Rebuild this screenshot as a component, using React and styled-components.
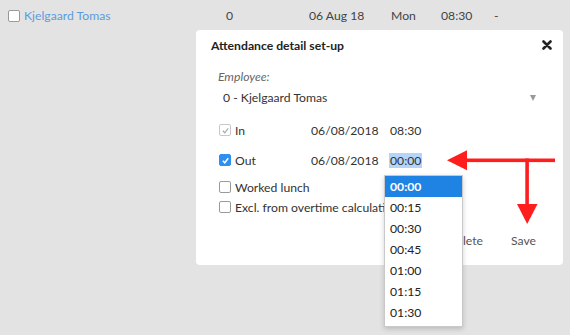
import React from "react";
import styled, { createGlobalStyle } from "styled-components";

const GlobalStyle = createGlobalStyle`
  html, body {
    margin: 0;
    padding: 0;
    background: #e3e3e3;
    font-family: Lato, "Open Sans", sans-serif;
    font-size: 12.2px;
    color: #333;
  }
`;

const times = ["00:00", "00:15", "00:30", "00:45", "01:00", "01:15", "01:30"];

const App = () => {
  return (
    <Page>
      <GlobalStyle />

      {/* list row behind the dialog */}
      <TopRow>
        <NameCell>
          <Check />
          <Link>Kjelgaard Tomas</Link>
        </NameCell>
        <Cell>0</Cell>
        <Cell>06 Aug 18</Cell>
        <Cell>Mon</Cell>
        <Cell>08:30</Cell>
        <Cell>-</Cell>
      </TopRow>

      <Dialog>
        <Title>
          <span>Attendance detail set-up</span>
          <CloseIcon width="10" height="10" viewBox="0 0 10 10">
            <path d="M1.5 1.5 L8.5 8.5 M8.5 1.5 L1.5 8.5" stroke="#222" strokeWidth="2.6" strokeLinecap="round" />
          </CloseIcon>
        </Title>

        <Body>
          <FieldLabel>Employee:</FieldLabel>
          <SelectRow>
            <span>0 - Kjelgaard Tomas</span>
            <Caret />
          </SelectRow>

          <TimeRow $top={14}>
            <CheckLabel>
              <Check $state="disabled">
                <Tick width="9" height="9" viewBox="0 0 10 10">
                  <path d="M2 5.3 L4.2 7.5 L8 2.6" stroke="#aaa" strokeWidth="1.3" fill="none" />
                </Tick>
              </Check>
              In
            </CheckLabel>
            <span>06/08/2018</span>
            <span>08:30</span>
          </TimeRow>

          <TimeRow $top={10}>
            <CheckLabel>
              <Check $state="on">
                <Tick width="9" height="9" viewBox="0 0 10 10">
                  <path d="M2 5.3 L4.2 7.5 L8 2.6" stroke="#fff" strokeWidth="1.7" fill="none" />
                </Tick>
              </Check>
              Out
            </CheckLabel>
            <span>06/08/2018</span>
            <Selected>00:00</Selected>
          </TimeRow>

          <OptionRow $top={7}>
            <Check />
            Worked lunch
          </OptionRow>
          <OptionRow>
            <Check />
            Excl. from overtime calculation
          </OptionRow>

          <Actions>
            <ActionButton>Delete</ActionButton>
            <ActionButton>Save</ActionButton>
          </Actions>
        </Body>
      </Dialog>

      <TimeList>
        {times.map((t, i) => (
          <TimeItem key={t} $active={i === 0}>{t}</TimeItem>
        ))}
      </TimeList>

      <Arrows width="130" height="90" viewBox="440 145 130 90">
        <g fill="#ff1e1e">
          <rect x="464" y="158.5" width="91" height="3.6" />
          <polygon points="447,160.3 467,150.3 467,170.3" />
          <rect x="525.3" y="158.5" width="3.6" height="48" />
          <polygon points="517,204 537.5,204 527.2,224" />
        </g>
      </Arrows>
    </Page>
  );
};

const Page = styled.div`
  position: relative;
  width: 570px;
  height: 335px;
  overflow: hidden;
`;

const TopRow = styled.div`
  display: grid;
  grid-template-columns: 218px 83px 82px 50px 53px auto;
  align-items: center;
  height: 31px;
  padding-left: 8px;
  color: #444;
`;

const NameCell = styled.div`
  display: flex;
  align-items: center;
  gap: 4px;
`;

const Cell = styled.div`
  white-space: nowrap;
`;

const Link = styled.span`
  color: #5b9be0;
`;

const Check = styled.span`
  display: inline-flex;
  align-items: center;
  justify-content: center;
  box-sizing: border-box;
  width: 12px;
  height: 12px;
  border-radius: 2px;
  border: 1px solid ${(p) => (p.$state === "on" ? "#2f8ff0" : p.$state === "disabled" ? "#c8c8c8" : "#9a9a9a")};
  background: ${(p) => (p.$state === "on" ? "#2f8ff0" : "#fff")};
  flex-shrink: 0;
`;

const Tick = styled.svg`
  display: block;
`;

const Dialog = styled.div`
  position: absolute;
  left: 196px;
  top: 30px;
  width: 367px;
  height: 235px;
  background: #fff;
  border-radius: 4px;
`;

const Title = styled.div`
  display: flex;
  align-items: center;
  justify-content: space-between;
  height: 30px;
  padding: 0 11px 0 15px;
  font-weight: 700;
  color: #222;
`;

const CloseIcon = styled.svg`
  display: block;
`;

const Body = styled.div`
  padding: 9px 0 0 22px;
`;

const FieldLabel = styled.div`
  font-style: italic;
  color: #666;
  line-height: 16px;
`;

const SelectRow = styled.div`
  display: flex;
  align-items: center;
  justify-content: space-between;
  margin-top: 5px;
  padding: 0 27px 0 5px;
  line-height: 16px;
`;

const Caret = styled.span`
  width: 0;
  height: 0;
  border-left: 3.5px solid transparent;
  border-right: 3.5px solid transparent;
  border-top: 6px solid #999;
`;

const TimeRow = styled.div`
  display: grid;
  grid-template-columns: 92px 79px auto;
  align-items: center;
  height: 20px;
  margin-top: ${(p) => p.$top || 0}px;
  padding-left: 1px;
`;

const CheckLabel = styled.div`
  display: flex;
  align-items: center;
  gap: 4px;
`;

const Selected = styled.span`
  justify-self: start;
  background: #b4d5fb;
  padding: 0 1px;
  margin-left: -1px;
`;

const OptionRow = styled.div`
  display: flex;
  align-items: center;
  gap: 4px;
  height: 20px;
  margin-top: ${(p) => p.$top || 0}px;
  padding-left: 1px;
  white-space: nowrap;
`;

const Actions = styled.div`
  display: flex;
  justify-content: flex-end;
  gap: 4px;
  margin-top: 8px;
  padding-right: 15px;
`;

const ActionButton = styled.button`
  font: inherit;
  color: #555;
  background: transparent;
  border: none;
  height: 30px;
  padding: 0 12px;
`;

const TimeList = styled.div`
  position: absolute;
  left: 384px;
  top: 175px;
  width: 79px;
  box-sizing: border-box;
  padding-bottom: 3px;
  background: #fff;
  border: 1px solid #c9c9c9;
  box-shadow: 0 2px 5px rgba(0, 0, 0, 0.18);
`;

const TimeItem = styled.div`
  height: 21px;
  line-height: 21px;
  padding-left: 5px;
  background: ${(p) => (p.$active ? "#1e83e3" : "transparent")};
  color: ${(p) => (p.$active ? "#fff" : "#222")};
  font-weight: ${(p) => (p.$active ? 700 : 400)};
`;

const Arrows = styled.svg`
  position: absolute;
  left: 440px;
  top: 145px;
  pointer-events: none;
`;

export default App;
